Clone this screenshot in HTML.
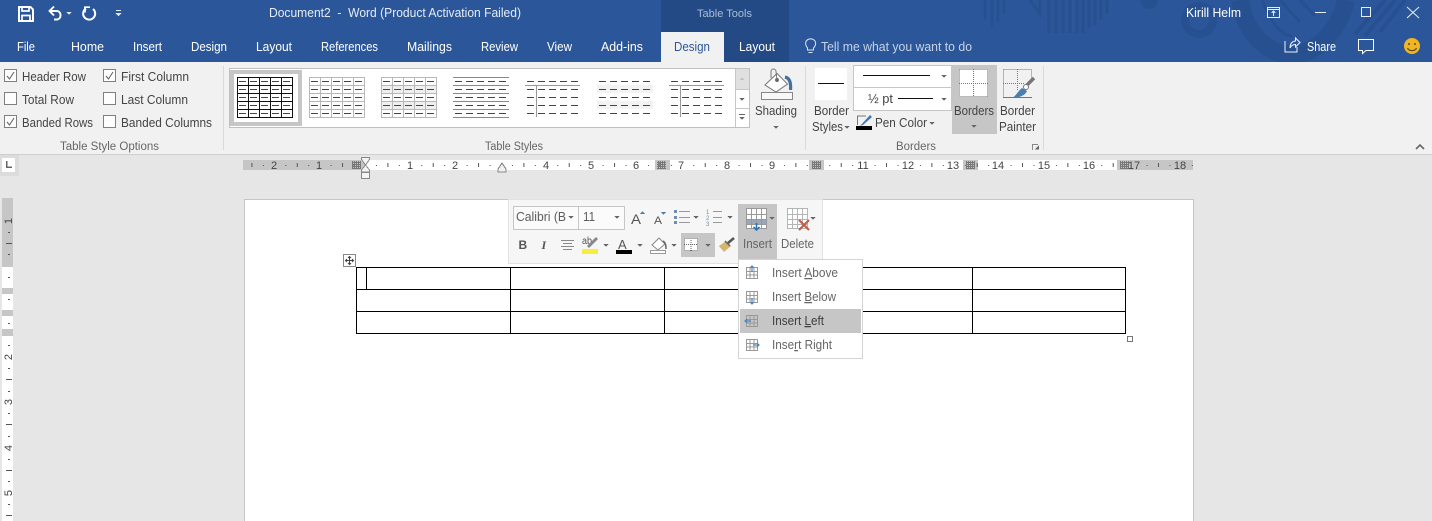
<!DOCTYPE html>
<html><head><meta charset="utf-8"><title>Document2 - Word</title>
<style>
html,body{margin:0;padding:0;width:1432px;height:521px;overflow:hidden;background:#e6e6e6}
svg{display:block}
text{font-family:"Liberation Sans",sans-serif;font-size:12.5px;fill:#444}
.w{fill:#fff}
.l{fill:#e6ecf5}
.g{fill:#666;font-size:11.5px}
.m{fill:#5c5c5c}
.r{fill:#444;font-size:11px;text-anchor:middle}
.c{fill:#666}
</style></head><body>
<svg width="1432" height="521" viewBox="0 0 1432 521" xmlns="http://www.w3.org/2000/svg" shape-rendering="crispEdges">
<defs>
<pattern id="d" width="11" height="8" patternUnits="userSpaceOnUse"><rect x="2" y="4" width="7" height="1" fill="#444"/></pattern>
<pattern id="ticks" width="45.33" height="10" patternUnits="userSpaceOnUse"><rect x="11" y="5" width="1" height="1" fill="#555"/><rect x="22.5" y="3" width="1" height="4" fill="#555"/><rect x="34" y="5" width="1" height="1" fill="#555"/></pattern>
<pattern id="hatch" width="2" height="2" patternUnits="userSpaceOnUse"><rect width="1" height="2" fill="#777"/><rect width="2" height="1" fill="#777"/></pattern>
<g id="gridV"><path d="M0 .5H56M0 8.500H56M0 16.500H56M0 24.500H56M0 32.500H56M0 40.500H56M.5 0V41M11.500 0V41M22.500 0V41M33.500 0V41M44.500 0V41M55.500 0V41" fill="none" stroke="#b8b8b8"/><rect width="55" height="40" fill="url(#d)"/></g>
<g id="dashes"><rect width="55" height="40" fill="url(#d)"/></g>
<path id="car" d="M-2.500 -1h5l-2.500 3z" fill="#666"/>
<path id="carw" d="M-2.500 -1h5l-2.500 3z" fill="#dfe6f0"/>
</defs>

<!-- title bar -->
<rect width="1432" height="62" fill="#2b579a"/>
<g fill="none" stroke="#275090" shape-rendering="auto">
<path d="M985 0V20M992 0V27M998 0V22M1004 0V14" stroke-width="3"/>
<path d="M1030 0L1040 14L1040 0" stroke-width="3"/>
<path d="M1049 0V33M1056 0V33M1063 0V33M1070 0V33M1077 0V33M1083 0V33M1089 0V28M1095 0V25M1101 0V20M1107 0V14" stroke-width="3.500"/>
<circle cx="1199" cy="20" r="14" stroke-width="8"/>
<path d="M1240 0C1245 35 1270 55 1292 55C1315 55 1340 30 1346 0" stroke-width="18"/>
<path d="M1262 0C1270 20 1280 35 1292 36M1280 0L1300 22M1300 0L1315 16" stroke-width="3"/>
<path d="M1385 0L1355 34M1395 0L1365 36M1405 0L1380 32" stroke-width="4"/>
</g>
<circle cx="1149" cy="0" r="9" fill="#275090" shape-rendering="auto"/>
<rect x="661" width="128" height="62" fill="#234a84"/>
<rect x="661" y="32" width="63" height="30" fill="#f1f1f1"/>

<!-- QAT -->
<g fill="none" stroke="#fff" stroke-width="2" shape-rendering="auto">
<path d="M19 7H30.500L33 9.500V21H19Z"/>
<path d="M22 7V11H29V7M22 21V15.500H30V21" stroke-width="1.700"/>
<path d="M50 11H57.500A4.500 4.500 0 0 1 57.500 19.500H54M54 6.500L49.500 11L54 15.500" stroke-width="1.900"/>
<path d="M86 8.500A6 6 0 1 0 93 9" stroke-width="2"/>
<path d="M84 7.200H90M85 7V12.500" stroke-width="1.700"/>
</g>
<use href="#carw" x="69" y="13"/>
<rect x="116" y="10" width="5" height="1" fill="#dfe6f0"/>
<path d="M115.500 13h6l-3 3.500z" fill="#dfe6f0"/>

<text class="l" x="269" y="17" textLength="252" lengthAdjust="spacingAndGlyphs" style="white-space:pre">Document2  -  Word (Product Activation Failed)</text>
<text x="697" y="17" textLength="55" lengthAdjust="spacingAndGlyphs" style="fill:#a9bcd6;font-size:11px">Table Tools</text>
<text class="w" x="1186" y="17" textLength="55" lengthAdjust="spacingAndGlyphs">Kirill Helm</text>

<!-- window controls -->
<g fill="none" stroke="#e8eef6">
<path d="M1267.500 7.500H1279.500V17.500H1267.500ZM1267.500 9.500H1279.500M1273.500 16V11.500M1271.500 13L1273.500 11L1275.500 13"/>
<path d="M1315 12.500H1326"/>
<rect x="1361.500" y="7.500" width="9" height="9" stroke-width="1"/>
<path d="M1407 7L1419 18M1419 7L1407 18" shape-rendering="auto"/>
</g>

<!-- tabs -->
<g>
<text class="w" x="17" y="51" textLength="18" lengthAdjust="spacingAndGlyphs">File</text>
<text class="w" x="71" y="51" textLength="33" lengthAdjust="spacingAndGlyphs">Home</text>
<text class="w" x="133" y="51" textLength="29" lengthAdjust="spacingAndGlyphs">Insert</text>
<text class="w" x="191" y="51" textLength="36" lengthAdjust="spacingAndGlyphs">Design</text>
<text class="w" x="256" y="51" textLength="36" lengthAdjust="spacingAndGlyphs">Layout</text>
<text class="w" x="321" y="51" textLength="57" lengthAdjust="spacingAndGlyphs">References</text>
<text class="w" x="407" y="51" textLength="45" lengthAdjust="spacingAndGlyphs">Mailings</text>
<text class="w" x="481" y="51" textLength="37" lengthAdjust="spacingAndGlyphs">Review</text>
<text class="w" x="547" y="51" textLength="25" lengthAdjust="spacingAndGlyphs">View</text>
<text class="w" x="601" y="51" textLength="42" lengthAdjust="spacingAndGlyphs">Add-ins</text>
<text x="674" y="51" textLength="36" lengthAdjust="spacingAndGlyphs" style="fill:#2b579a">Design</text>
<text class="w" x="739" y="51" textLength="36" lengthAdjust="spacingAndGlyphs">Layout</text>
<text x="821" y="51" textLength="151" lengthAdjust="spacingAndGlyphs" style="fill:#c6d3e6">Tell me what you want to do</text>
<text class="w" x="1307" y="51" textLength="29" lengthAdjust="spacingAndGlyphs">Share</text>
</g>
<g fill="none" stroke="#dde5f0" shape-rendering="auto">
<path d="M807.500 48C805 45 805 41 808 39.500C810 38.500 812 38.500 814 40C816.500 42 816 45.500 813.500 48V50H807.500ZM808.500 52.500H812.500"/>
<path d="M1285 41V52H1297V47M1290 48C1290 43 1293 41 1295.500 41V38L1300 42.500L1295.500 47V44.500C1293 44.500 1291 46 1290 48Z" stroke="#eef2f8"/>
<path d="M1358.500 39.500H1373.500V50.500H1366L1362.500 53.500V50.500H1358.500Z" stroke="#fff"/>
</g>
<g shape-rendering="auto">
<circle cx="1412" cy="46" r="8" fill="#f2b521"/>
<circle cx="1409" cy="44" r="1" fill="#5d4a17"/><circle cx="1415" cy="44" r="1" fill="#5d4a17"/>
<path d="M1407.500 48C1409 51.500 1415 51.500 1416.500 48" fill="none" stroke="#5d4a17" stroke-width="1.200"/>
</g>

<!-- ribbon -->
<rect y="62" width="1432" height="92" fill="#f1f1f1"/>
<rect y="154" width="1432" height="1" fill="#cfcfcf"/>
<rect x="223" y="66" width="1" height="84" fill="#dadada"/>
<rect x="805" y="66" width="1" height="84" fill="#dadada"/>
<rect x="1043" y="66" width="1" height="84" fill="#dadada"/>

<!-- checkboxes -->
<g fill="#fdfdfd" stroke="#808080">
<rect x="4.500" y="69.500" width="12" height="12"/><rect x="4.500" y="92.500" width="12" height="12"/><rect x="4.500" y="115.500" width="12" height="12"/>
<rect x="103.500" y="69.500" width="12" height="12"/><rect x="103.500" y="92.500" width="12" height="12"/><rect x="103.500" y="115.500" width="12" height="12"/>
</g>
<g fill="none" stroke="#666" stroke-width="1.100" shape-rendering="auto">
<path d="M7 76L9.500 79L14 72M7 122L9.500 125L14 118M106 76L108.500 79L113 72"/>
</g>
<text x="22" y="81" textLength="64" lengthAdjust="spacingAndGlyphs">Header Row</text>
<text x="22" y="104" textLength="52" lengthAdjust="spacingAndGlyphs">Total Row</text>
<text x="22" y="127" textLength="71" lengthAdjust="spacingAndGlyphs">Banded Rows</text>
<text x="121" y="81" textLength="68" lengthAdjust="spacingAndGlyphs">First Column</text>
<text x="121" y="104" textLength="67" lengthAdjust="spacingAndGlyphs">Last Column</text>
<text x="121" y="127" textLength="91" lengthAdjust="spacingAndGlyphs">Banded Columns</text>
<text class="g" x="60" y="150" textLength="99" lengthAdjust="spacingAndGlyphs">Table Style Options</text>
<text class="g" x="485" y="150" textLength="58" lengthAdjust="spacingAndGlyphs">Table Styles</text>
<text class="g" x="896" y="150" textLength="40" lengthAdjust="spacingAndGlyphs">Borders</text>

<!-- gallery -->
<rect x="229.500" y="68.500" width="520" height="59" fill="#fff" stroke="#c0c0c0"/>
<rect x="232" y="72" width="68" height="52" fill="#fff" stroke="#c6c6c6" stroke-width="4"/>
<g transform="translate(237,77)"><path d="M.5 .5H55.500V40.500H.5ZM0 8.500H56M0 16.500H56M0 24.500H56M0 32.500H56M11.500 0V41M22.500 0V41M33.500 0V41M44.500 0V41" fill="none" stroke="#111"/><use href="#dashes"/></g>
<use href="#gridV" x="309" y="77"/>
<rect x="381" y="85" width="56" height="8" fill="#efefef"/><rect x="381" y="101" width="56" height="8" fill="#efefef"/>
<use href="#gridV" x="381" y="77"/>
<g transform="translate(453,77)"><path d="M0 .5H56M0 8.500H56M0 16.500H56M0 24.500H56M0 32.500H56M0 40.500H56" stroke="#888" fill="none"/><use href="#dashes"/></g>
<g transform="translate(525,77)"><path d="M0 8.500H55M11.500 8V40" stroke="#999" fill="none"/><use href="#dashes"/></g>
<g transform="translate(597,77)"><rect y="8" width="56" height="8" fill="#f3f3f3"/><rect y="24" width="56" height="8" fill="#f3f3f3"/><use href="#dashes"/></g>
<g transform="translate(669,77)"><path d="M0 8.500H55M11.500 8V40" stroke="#999" fill="none"/><use href="#dashes"/></g>
<rect x="736" y="69" width="13" height="20" fill="#e0e0e0"/>
<rect x="736" y="89" width="13" height="1" fill="#c6c6c6"/>
<rect x="736" y="108" width="13" height="1" fill="#c6c6c6"/>
<rect x="735" y="69" width="1" height="58" fill="#c6c6c6"/>
<path d="M739.500 80h5l-2.500-3z" fill="#c4c4c4"/>
<use href="#car" x="742" y="99"/>
<rect x="739" y="114" width="6" height="1" fill="#666"/><path d="M739.500 117h5l-2.500 3z" fill="#666"/>

<!-- shading -->
<g shape-rendering="auto" fill="none" stroke="#777">
<path d="M765 85L777 73.500L787.500 84L776 92Z" fill="#fdfdfd"/>
<path d="M771 78V71.500A2.500 2.500 0 0 1 776 71.500L777 80" stroke-width="1"/>
<circle cx="777" cy="80" r="1.600" fill="#666"/>
<path d="M785 77C790 78 791 84 790.500 90" stroke="#41719c" stroke-width="3.200"/>
</g>
<rect x="761.500" y="92.500" width="31" height="7" fill="#f8f8f8" stroke="#888"/>
<text x="755" y="115" textLength="42" lengthAdjust="spacingAndGlyphs">Shading</text>
<use href="#car" x="776" y="127"/>

<!-- border styles -->
<rect x="815" y="68" width="32" height="32" fill="#fff"/>
<rect x="818" y="83" width="26" height="1" fill="#111"/>
<text x="814" y="115" textLength="35" lengthAdjust="spacingAndGlyphs">Border</text>
<text x="812" y="131" textLength="31" lengthAdjust="spacingAndGlyphs">Styles</text>
<use href="#car" x="847" y="127"/>
<rect x="853.500" y="65.500" width="98" height="22" fill="#fff" stroke="#c6c6c6"/>
<rect x="853.500" y="87.500" width="98" height="23" fill="#fff" stroke="#c6c6c6"/>
<rect x="863" y="75" width="67" height="1" fill="#111"/>
<use href="#car" x="944" y="76"/>
<text x="868" y="103" textLength="25" lengthAdjust="spacingAndGlyphs">½ pt</text>
<rect x="898" y="98" width="35" height="1" fill="#111"/>
<use href="#car" x="944" y="99"/>
<g shape-rendering="auto"><path d="M857.500 125V116H866" fill="none" stroke="#777"/><path d="M870 115L872 117L863 125L860 126Z" fill="#3f78b5"/></g>
<rect x="856" y="126" width="16" height="4" fill="#000"/>
<text x="875" y="127" textLength="52" lengthAdjust="spacingAndGlyphs">Pen Color</text>
<use href="#car" x="932" y="123"/>

<!-- borders -->
<rect x="952" y="65" width="45" height="69" fill="#c6c6c6"/>
<rect x="959" y="69" width="29" height="28" fill="#fff"/>
<path d="M959.500 69.500H987.500V96.500M959.500 69.500V96.500H987.500M973.500 69V97M959 83.500H988" fill="none" stroke="#777" stroke-dasharray="1 1"/>
<text x="954" y="115" textLength="40" lengthAdjust="spacingAndGlyphs">Borders</text>
<use href="#car" x="974" y="126"/>
<path d="M1003.500 69.500H1031.500V80M1003.500 69.500V97M1017.500 69V90M1003 83.500H1025" fill="none" stroke="#777" stroke-dasharray="1 1"/>
<rect x="1003" y="97" width="29" height="1" fill="#4a7fb0"/>
<g shape-rendering="auto"><path d="M1034 78L1027 85" stroke="#777" stroke-width="3.500"/><path d="M1022 88L1027 91C1025 96 1018 98 1012 98C1016 96 1018 91 1022 88Z" fill="#4a7fb0"/><circle cx="1026" cy="87" r="2.500" fill="#fff" stroke="#777"/></g>
<text x="1000" y="115" textLength="35" lengthAdjust="spacingAndGlyphs">Border</text>
<text x="999" y="131" textLength="37" lengthAdjust="spacingAndGlyphs">Painter</text>
<path d="M1032.500 150V144.500H1038" fill="none" stroke="#888"/><path d="M1039 149.500H1034.500L1039 145Z" fill="#666"/>
<path d="M1416 149L1420 145L1424 149" fill="none" stroke="#666" stroke-width="1.600" shape-rendering="auto"/>

<!-- canvas -->
<rect y="155" width="1432" height="366" fill="#e6e6e6"/>
<rect x="0" y="155" width="19" height="21" fill="#dcdcdc"/>
<rect x="2" y="158" width="13" height="14" fill="#fff"/>
<path d="M6 161V168H12V166.500H7.500V161Z" fill="#666"/>

<!-- h ruler -->
<rect x="243" y="160" width="950" height="10" fill="#c6c6c6"/>
<rect x="365" y="160" width="752" height="10" fill="#fff"/>
<rect x="655" y="160" width="15" height="10" fill="#c6c6c6"/>
<rect x="809" y="160" width="15" height="10" fill="#c6c6c6"/>
<rect x="963" y="160" width="15" height="10" fill="#c6c6c6"/>
<g transform="translate(365,160)"><rect x="-122" width="950" height="10" fill="url(#ticks)"/></g>
<rect x="352" y="161" width="9" height="8" fill="url(#hatch)"/>
<rect x="657" y="161" width="9" height="8" fill="url(#hatch)"/>
<rect x="812" y="161" width="9" height="8" fill="url(#hatch)"/>
<rect x="966" y="161" width="9" height="8" fill="url(#hatch)"/>
<rect x="1120" y="161" width="9" height="8" fill="url(#hatch)"/>
<g>
<text class="r" x="274" y="169">2</text><text class="r" x="319" y="169">1</text>
<text class="r" x="410" y="169">1</text><text class="r" x="455" y="169">2</text>
<text class="r" x="546" y="169">4</text><text class="r" x="591" y="169">5</text><text class="r" x="636" y="169">6</text>
<text class="r" x="681" y="169">7</text><text class="r" x="727" y="169">8</text><text class="r" x="772" y="169">9</text>
<text class="r" x="863" y="169">11</text><text class="r" x="908" y="169">12</text><text class="r" x="953" y="169">13</text>
<text class="r" x="998" y="169">14</text><text class="r" x="1044" y="169">15</text><text class="r" x="1089" y="169">16</text>
<text class="r" x="1134" y="169">17</text><text class="r" x="1180" y="169">18</text>
</g>
<path d="M361.500 157.500H369.500V159.500L365.500 165L361.500 159.500ZM361.500 172V170L365.500 165L369.500 170V172ZM361.500 172.500H369.500V178.500H361.500Z" fill="#f4f4f4" stroke="#888"/>
<path d="M498 172V169L502 163L506 169V172Z" fill="#f0f0f0" stroke="#888"/>

<!-- v ruler -->
<rect x="2" y="198" width="11" height="323" fill="#fff"/>
<rect x="2" y="198" width="11" height="69" fill="#c6c6c6"/>
<rect x="2" y="288" width="11" height="6" fill="#c6c6c6"/>
<rect x="2" y="310" width="11" height="6" fill="#c6c6c6"/>
<rect x="2" y="329" width="11" height="7" fill="#c6c6c6"/>
<g fill="#555">
<rect x="8" y="232" width="2" height="1"/><rect x="6" y="243" width="6" height="1"/><rect x="8" y="254" width="2" height="1"/>
<rect x="8" y="277" width="2" height="1"/><rect x="8" y="299" width="2" height="1"/><rect x="8" y="323" width="2" height="1"/><rect x="8" y="345" width="2" height="1"/>
<rect x="8" y="368" width="2" height="1"/><rect x="6" y="379" width="6" height="1"/><rect x="8" y="391" width="2" height="1"/>
<rect x="8" y="413" width="2" height="1"/><rect x="6" y="424" width="6" height="1"/><rect x="8" y="436" width="2" height="1"/>
<rect x="8" y="459" width="2" height="1"/><rect x="6" y="470" width="6" height="1"/><rect x="8" y="481" width="2" height="1"/>
<rect x="8" y="504" width="2" height="1"/><rect x="6" y="515" width="6" height="1"/>
</g>
<g style="shape-rendering:auto">
<text class="r" transform="translate(12,221) rotate(-90)">1</text>
<text class="r" transform="translate(12,357) rotate(-90)">2</text>
<text class="r" transform="translate(12,402) rotate(-90)">3</text>
<text class="r" transform="translate(12,448) rotate(-90)">4</text>
<text class="r" transform="translate(12,493) rotate(-90)">5</text>
</g>

<!-- page -->
<rect x="244" y="199" width="950" height="322" fill="#c6c6c6"/>
<rect x="245" y="200" width="948" height="321" fill="#fff"/>

<!-- table -->
<path d="M356.500 267.500H1125.500V333.500H356.500ZM356 289.500H1126M356 311.500H1126M510.500 267V334M664.500 267V334M818.500 267V334M972.500 267V334M366.500 268V289" fill="none" stroke="#000"/>
<rect x="343.500" y="254.500" width="12" height="12" fill="#fff" stroke="#888"/>
<path d="M349.500 256.500V264.500M345.500 260.500H353.500" stroke="#444"/>
<path d="M348 258L349.500 256.500L351 258M348 263L349.500 264.500L351 263M347 259L345.500 260.500L347 262M352 259L353.500 260.500L352 262" fill="none" stroke="#444" shape-rendering="auto"/>
<rect x="1127.500" y="336.500" width="5" height="5" fill="#fff" stroke="#777"/>

<!-- mini toolbar -->
<rect x="508" y="199" width="315" height="65" fill="#e2e2e2"/>
<rect x="509" y="200" width="313" height="63" fill="#f6f6f6"/>
<rect x="513.500" y="206.500" width="65" height="23" fill="#fbfbfb" stroke="#c6c6c6"/>
<rect x="578.500" y="206.500" width="46" height="23" fill="#fbfbfb" stroke="#c6c6c6"/>
<text x="516" y="221" textLength="50" lengthAdjust="spacingAndGlyphs" class="m">Calibri (B</text>
<use href="#car" x="571" y="217"/>
<text x="583" y="221" textLength="12" lengthAdjust="spacingAndGlyphs" class="m">11</text>
<use href="#car" x="617" y="217"/>
<text x="631" y="224" textLength="10" lengthAdjust="spacingAndGlyphs" style="font-size:14px;fill:#555">A</text>
<path d="M640 214h5l-2.500-3z" fill="#4a7fb0"/>
<text x="654" y="224" textLength="8" lengthAdjust="spacingAndGlyphs" style="font-size:11px;fill:#555">A</text>
<path d="M661 212h5l-2.500 3z" fill="#4a7fb0"/>
<g fill="#999">
<rect x="679" y="211" width="11" height="1"/><rect x="679" y="217" width="11" height="1"/><rect x="679" y="222" width="11" height="1"/>
<rect x="713" y="211" width="9" height="1"/><rect x="713" y="217" width="9" height="1"/><rect x="713" y="222" width="9" height="1"/>
</g>
<g fill="#6d8fae"><rect x="674" y="210" width="3" height="3"/><rect x="674" y="216" width="3" height="3"/><rect x="674" y="221" width="3" height="3"/></g>
<text x="706" y="214" style="font-size:6px;fill:#6d8fae">1</text><text x="706" y="220" style="font-size:6px;fill:#6d8fae">2</text><text x="706" y="226" style="font-size:6px;fill:#6d8fae">3</text>
<use href="#car" x="696" y="217"/><use href="#car" x="730" y="217"/>

<rect x="738" y="204" width="39" height="56" fill="#c6c6c6"/>
<rect x="746" y="208" width="21" height="21" fill="#fff"/>
<rect x="746" y="219" width="21" height="5" fill="#9aa7b8"/>
<path d="M746.500 208.500H766.500V228.500H746.500ZM746 214.500H767M746 219.500H767M746 224.500H767M751.500 208V229M756.500 208V229M761.500 208V229" fill="none" stroke="#999"/>
<path d="M756.500 223V230M753.500 227L756.500 230L759.500 227" fill="none" stroke="#2e75b6" stroke-width="1.600" shape-rendering="auto"/>
<use href="#car" x="772" y="218"/>
<text x="743" y="248" textLength="29" lengthAdjust="spacingAndGlyphs" class="c">Insert</text>
<rect x="787" y="208" width="21" height="21" fill="#fff"/>
<path d="M787.500 208.500H807.500V228.500H787.500ZM787 214.500H808M787 219.500H808M787 224.500H808M792.500 208V229M797.500 208V229M802.500 208V229" fill="none" stroke="#b5b5b5"/>
<path d="M799 220L809 230M809 220L799 230" stroke="#c0604a" stroke-width="2.200" shape-rendering="auto"/>
<use href="#car" x="813" y="218"/>
<text x="781" y="248" textLength="33" lengthAdjust="spacingAndGlyphs" class="c">Delete</text>

<text x="518.500" y="249" style="font-size:12px;font-weight:bold;fill:#555">B</text>
<text x="541.500" y="249" style="font-size:12px;font-style:italic;font-family:'Liberation Serif',serif;font-weight:bold;fill:#555">I</text>
<path d="M561 240.500H574M563 243.500H572M561 246.500H574M563 249.500H572" stroke="#888"/>
<text x="582" y="244" textLength="10" lengthAdjust="spacingAndGlyphs" style="font-size:10px;fill:#555">ab</text>
<path d="M588 247L597 238" stroke="#888" stroke-width="3" shape-rendering="auto"/>
<rect x="582" y="249" width="16" height="5" fill="#f5ee3a"/>
<use href="#car" x="606" y="245"/>
<text x="618" y="249" style="font-size:13px;fill:#555">A</text>
<rect x="616" y="250" width="16" height="4" fill="#000"/>
<use href="#car" x="640" y="245"/>
<g shape-rendering="auto" fill="none" stroke="#888"><path d="M652 245L659 238L665 244L658 250Z" fill="#fff"/><path d="M663 241C666 243 666 246 666 249" stroke="#666" stroke-width="1.500"/></g>
<rect x="650.500" y="250.500" width="15" height="3" fill="#fff" stroke="#999"/>
<use href="#car" x="674" y="245"/>
<rect x="681" y="233" width="34" height="24" fill="#c6c6c6"/>
<rect x="684" y="238" width="14" height="13" fill="#fff"/>
<path d="M684.500 238.500H697.500V250.500H684.500ZM691 238V251M684 244.500H698" fill="none" stroke="#666" stroke-dasharray="1 1"/>
<use href="#car" x="708" y="245"/>
<g shape-rendering="auto"><path d="M728 243L734 238" stroke="#555" stroke-width="2.500"/><path d="M719 246L726 241L731 246L724 252C722 249 720 248 719 246Z" fill="#d6b56e"/><path d="M725 241L730 246" stroke="#666" stroke-width="1.500"/></g>

<!-- dropdown -->
<rect x="738" y="259" width="125" height="100" fill="#d4d4d4"/>
<rect x="739" y="260" width="123" height="98" fill="#fff"/>
<rect x="740" y="309" width="121" height="24" fill="#c6c6c6"/>
<g fill="none" stroke="#999">
<path d="M746.500 267.500H757.500V278.500H746.500ZM746 271.500H758M746 275H758M750 267V279M754 267V279"/>
<path d="M746.500 291.500H757.500V302.500H746.500ZM746 295.500H758M746 299H758M750 291V303M754 291V303"/>
<path d="M746.500 315.500H757.500V326.500H746.500ZM746 319.500H758M746 323H758M750 315V327M754 315V327"/>
<path d="M746.500 339.500H757.500V350.500H746.500ZM746 343.500H758M746 347H758M750 339V351M754 339V351"/>
</g>
<g fill="none" stroke="#4f86bb" stroke-width="1.200" shape-rendering="auto">
<path d="M752 272V266M750 268L752 266L754 268"/>
<path d="M752 298V304M750 302L752 304L754 302"/>
<path d="M751 321H745M747 319L745 321L747 323"/>
<path d="M753 345H759M757 343L759 345L757 347"/>
</g>
<text x="772" y="277" textLength="66" lengthAdjust="spacingAndGlyphs" class="c">Insert <tspan text-decoration="underline">A</tspan>bove</text>
<text x="772" y="301" textLength="64" lengthAdjust="spacingAndGlyphs" class="c">Insert <tspan text-decoration="underline">B</tspan>elow</text>
<text x="772" y="325" textLength="52" lengthAdjust="spacingAndGlyphs" style="fill:#3f3f3f">Insert <tspan text-decoration="underline">L</tspan>eft</text>
<text x="772" y="349" textLength="60" lengthAdjust="spacingAndGlyphs" class="c">Inse<tspan text-decoration="underline">r</tspan>t Right</text>
</svg>
</body></html>
